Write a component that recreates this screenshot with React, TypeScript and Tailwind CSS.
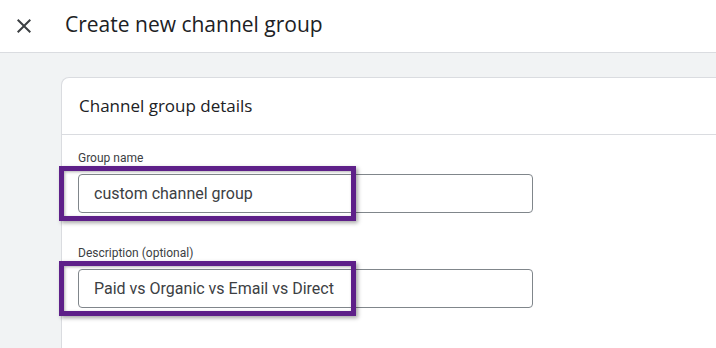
import React from 'react';

// ─── Annotated field ──────────────────────────────────────────────────────────

const Field: React.FC<{ label: string; value: string; className?: string }> = ({ label, value, className }) => (
  <div className={className}>
    <p className="text-[12px] leading-4 text-[#3c4043] mb-2">{label}</p>
    <div className="relative w-[455px]">
      <div className="h-[39px] rounded-[4px] border border-[#80868b] bg-white flex items-center pl-[15px] text-[16px] text-[#3c4043]">
        {value}
      </div>
      {/* highlight frame */}
      <div className="absolute -left-[19px] -top-[8px] w-[297px] h-[55px] border-[5px] border-[#5e2089] shadow-[2px_2px_4px_rgba(0,0,0,0.35),inset_1px_1px_3px_rgba(0,0,0,0.3)]" />
    </div>
  </div>
);

// ─── Page ─────────────────────────────────────────────────────────────────────

export default function App() {
  return (
    <div className="w-[716px] h-[348px] overflow-hidden bg-[#f1f3f4] flex flex-col" style={{ fontFamily: 'Roboto, "Liberation Sans", sans-serif' }}>
      {/* Header */}
      <div className="h-[53px] shrink-0 bg-white border-b border-[#dadce0] flex items-center">
        <button className="w-6 h-6 ml-[12px] mr-[29px] flex items-center justify-center text-[#3c4043]">
          <svg width="24" height="24" viewBox="0 0 24 24" fill="currentColor">
            <path d="M19 6.41 17.59 5 12 10.59 6.41 5 5 6.41 10.59 12 5 17.59 6.41 19 12 13.41 17.59 19 19 17.59 13.41 12z" />
          </svg>
        </button>
        <h1 className="text-[21px] text-[#202124] -mt-[2px]" style={{ fontFamily: '"Open Sans", Roboto, sans-serif' }}>
          Create new channel group
        </h1>
      </div>

      {/* Content */}
      <div className="flex-1 pl-[61px] pt-[24px]">
        <div className="w-[700px] h-full bg-white border border-[#dadce0] border-b-0 rounded-tl-[8px]">
          <div className="h-[57px] border-b border-[#dadce0] flex items-center pl-[17px]">
            <h2 className="text-[17px] text-[#202124]" style={{ fontFamily: '"Open Sans", Roboto, sans-serif' }}>Channel group details</h2>
          </div>
          <div className="pl-[16px] pt-[15px]">
            <Field label="Group name" value="custom channel group" />
            <Field label="Description (optional)" value="Paid vs Organic vs Email vs Direct" className="mt-[32px]" />
          </div>
        </div>
      </div>
    </div>
  );
}
